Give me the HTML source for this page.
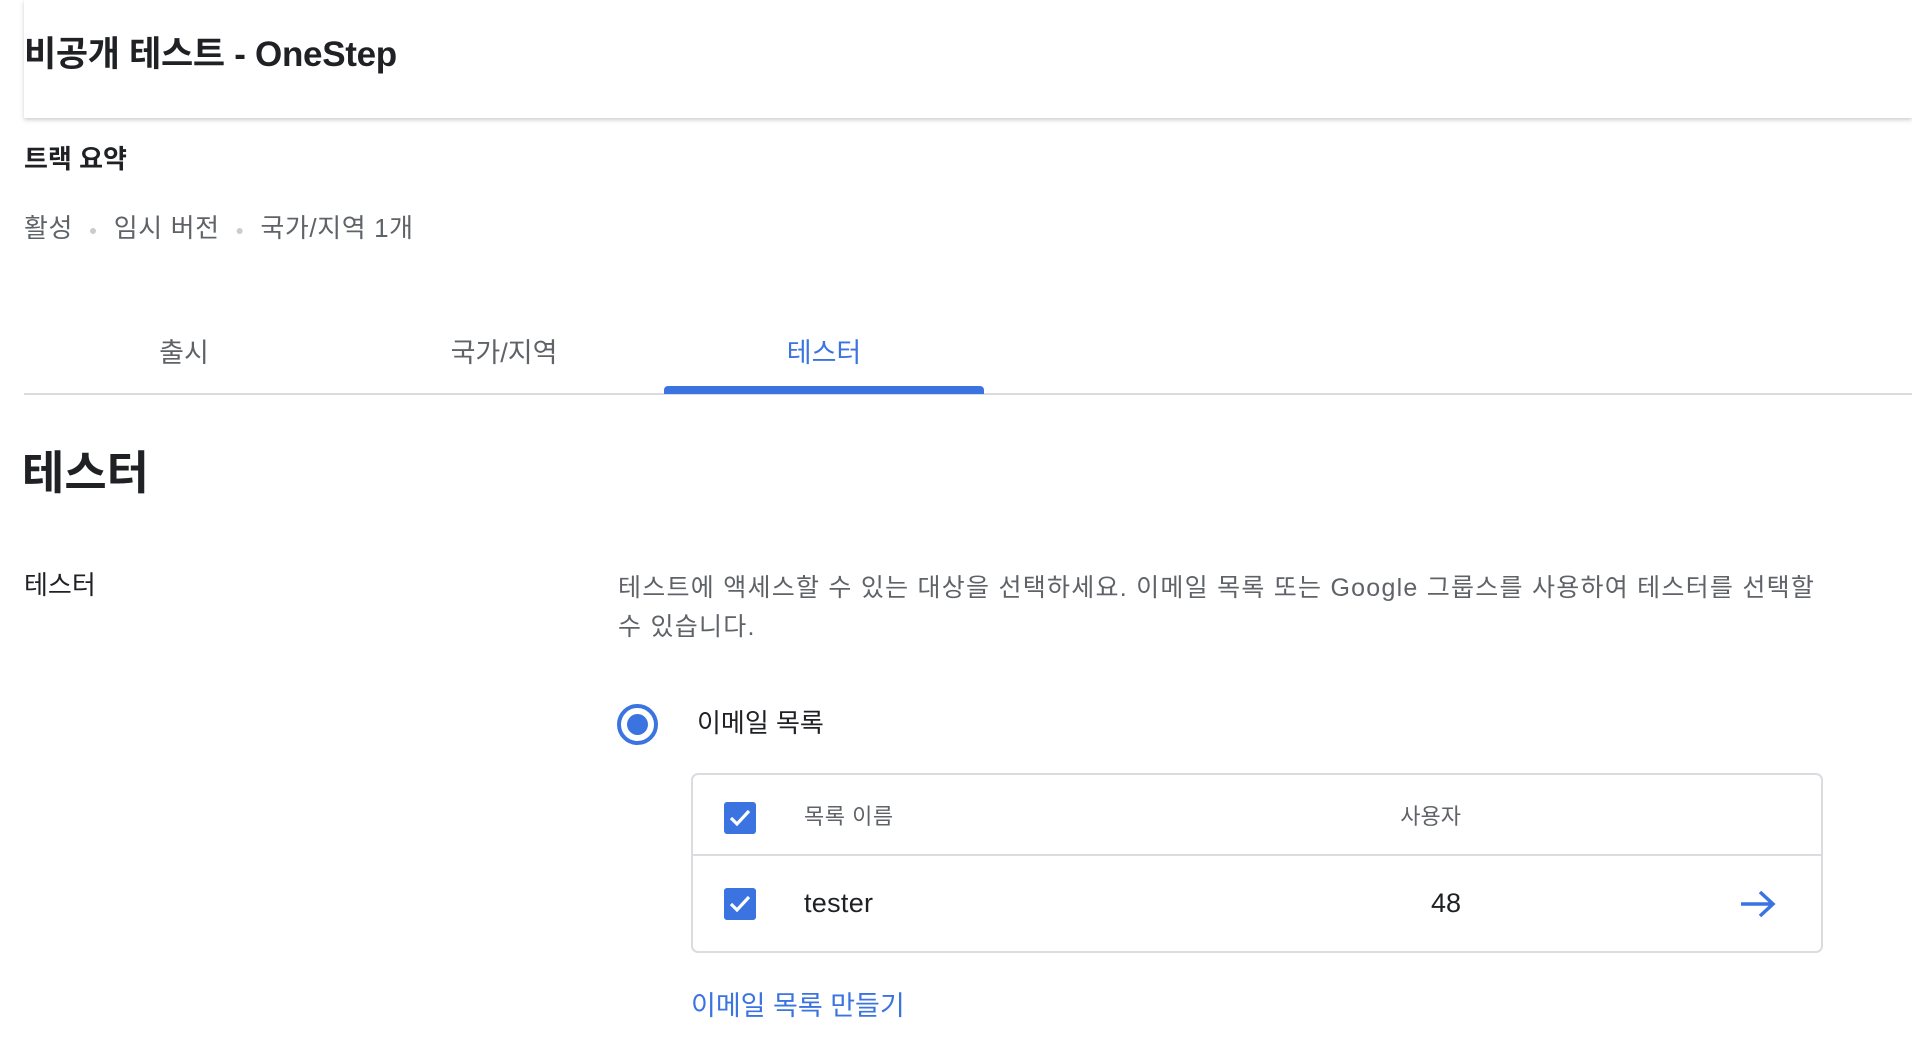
<!DOCTYPE html>
<html><head><meta charset="utf-8"><style>
*{margin:0;padding:0;box-sizing:border-box}
body{width:1912px;height:1064px;background:#fff;font-family:"Liberation Sans","Noto Sans CJK KR",sans-serif;color:#202124;position:relative;overflow:hidden}
.a{position:absolute;white-space:nowrap;line-height:1}
.hdr{position:absolute;left:24px;right:0;top:0;height:118px;box-shadow:0 2px 4px rgba(60,64,67,.25);background:#fff}
.blue{color:#3b74e0}
.cb{position:absolute;left:724px;width:32px;height:32px;background:#3b74e0;border-radius:3px}
</style></head><body>
<div class="hdr"></div>
<div class="a" style="left:24px;top:37px;font-size:35px;font-weight:700;letter-spacing:-0.3px">비공개 테스트 - OneStep</div>
<div class="a" style="left:24px;top:146px;font-size:26px;font-weight:700">트랙 요약</div>
<div class="a" style="left:24px;top:215px;font-size:26px;color:#5f6368;letter-spacing:0.6px">활성 <span style="color:#ccc;font-size:14px;vertical-align:middle;margin:0 8px">●</span> 임시 버전 <span style="color:#ccc;font-size:14px;vertical-align:middle;margin:0 8px">●</span> 국가/지역 1개</div>
<div class="a" style="left:24px;width:320px;text-align:center;top:340px;font-size:27px;color:#5f6368">출시</div>
<div class="a" style="left:344px;width:320px;text-align:center;top:340px;font-size:27px;color:#5f6368">국가/지역</div>
<div class="a blue" style="left:664px;width:320px;text-align:center;top:340px;font-size:27px">테스터</div>
<div style="position:absolute;left:24px;right:0;top:393px;height:2px;background:#dadce0"></div>
<div style="position:absolute;left:664px;width:320px;top:386px;height:8px;background:#3b74e0;border-radius:4px 4px 0 0"></div>
<div class="a" style="left:22px;top:450px;font-size:46px;font-weight:700">테스터</div>
<div class="a" style="left:24px;top:572px;font-size:26px;color:#202124">테스터</div>
<div class="a" style="left:618px;top:569px;font-size:25px;color:#5f6368;line-height:39px;letter-spacing:1.25px">테스트에 액세스할 수 있는 대상을 선택하세요. 이메일 목록 또는 Google 그룹스를 사용하여 테스터를 선택할<br>수 있습니다.</div>
<div style="position:absolute;left:617px;top:704px;width:41px;height:41px;border:4px solid #3b74e0;border-radius:50%"></div>
<div style="position:absolute;left:627px;top:714px;width:21px;height:21px;background:#3b74e0;border-radius:50%"></div>
<div class="a" style="left:697px;top:710px;font-size:26px">이메일 목록</div>
<div style="position:absolute;left:691px;top:773px;width:1132px;height:180px;border:2px solid #dadce0;border-radius:7px"></div>
<div style="position:absolute;left:691px;top:854px;width:1132px;height:2px;background:#dadce0"></div>
<div class="cb" style="top:802px"><svg width="32" height="32"><path d="M7 16l6 6 12-13" stroke="#fff" stroke-width="3.2" fill="none"/></svg></div>
<div class="cb" style="top:888px"><svg width="32" height="32"><path d="M7 16l6 6 12-13" stroke="#fff" stroke-width="3.2" fill="none"/></svg></div>
<div class="a" style="left:804px;top:806px;font-size:22px;color:#5f6368;letter-spacing:0.5px">목록 이름</div>
<div class="a" style="right:451px;top:806px;font-size:22px;color:#5f6368">사용자</div>
<div class="a" style="left:804px;top:890px;font-size:27px;letter-spacing:0.3px">tester</div>
<div class="a" style="right:451px;top:890px;font-size:27px">48</div>
<svg style="position:absolute;left:1739px;top:889px" width="38" height="30"><path d="M2 15h32M21 3l13 12-13 12" stroke="#3b74e0" stroke-width="3.5" fill="none"/></svg>
<div class="a blue" style="left:691px;top:993px;font-size:27px">이메일 목록 만들기</div>
</body></html>
